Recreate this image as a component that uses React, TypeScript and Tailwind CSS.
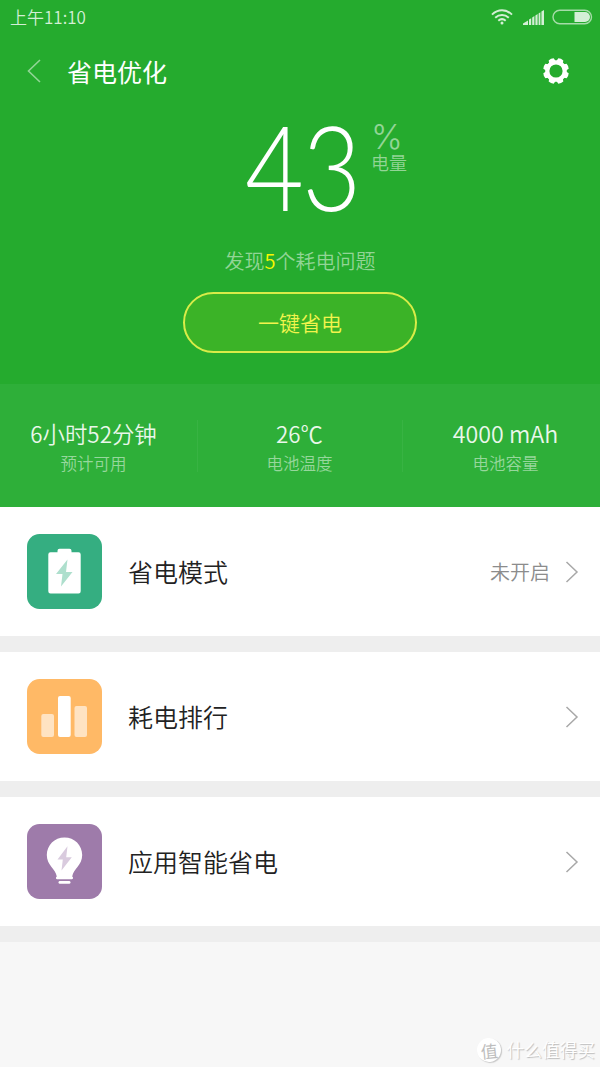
import React from "react";

const Bolt = ({ className }: { className?: string }) => (
  <path className={className} d="M40.5 25.5 29 40h6.5L34 52.5 45.5 38H39z" />
);

const SaverIcon = () => (
  <svg viewBox="0 0 75 75" className="size-[75px] shrink-0">
    <rect width="75" height="75" rx="12.5" fill="#35ae81" />
    <path
      d="M32 14.8h10.500a2 2 0 0 1 2 2v1.500h7a2.200 2.200 0 0 1 2.200 2.200v36.700a2.200 2.200 0 0 1-2.200 2.200H23.500a2.200 2.200 0 0 1-2.200-2.200V20.500a2.200 2.200 0 0 1 2.200-2.200h7v-1.500a2 2 0 0 1 2-2z"
      fill="#fff"
    />
    <Bolt className="fill-[#aedfcd]" />
  </svg>
);

const RankIcon = () => (
  <svg viewBox="0 0 75 75" className="size-[75px] shrink-0">
    <rect width="75" height="75" rx="12.5" fill="#ffb966" />
    <rect x="14.3" y="35" width="12.700" height="23" rx="2" fill="#ffe3c2" />
    <rect x="31" y="17" width="12.700" height="41" rx="2" fill="#fff" />
    <rect x="47.500" y="27" width="12.500" height="31" rx="2" fill="#ffe3c2" />
  </svg>
);

const SmartIcon = () => (
  <svg viewBox="0 0 75 75" className="size-[75px] shrink-0">
    <rect width="75" height="75" rx="12.5" fill="#9e7baa" />
    <path
      d="M37.500 13.500C27.500 13.500 19.800 21.300 19.800 31c0 10.500 8.700 13.500 10 21.500-1.200.6-1.300 2.700.2 2.700h15c1.500 0 1.400-2.100.2-2.700 1.300-8 10-11 10-21.500 0-9.700-7.700-17.500-17.700-17.500z"
      fill="#fff"
    />
    <rect x="31.500" y="57" width="12" height="2.800" rx="1.400" fill="#fff" />
    <path d="M40.500 22.300 30.500 35.500h5.300L34.500 46.500 44.800 33.200h-5.600z" fill="#d9cbde" />
  </svg>
);

const Chevron = () => (
  <svg viewBox="0 0 14 22" className="h-[22px] w-[14px]" fill="none" stroke="#a8a8a8" strokeWidth="1.5">
    <path d="M1.500 1 12 11 1.500 21" />
  </svg>
);

const StatusIcons = () => (
  <div className="flex items-center">
    <svg viewBox="0 0 22 16" className="h-4 w-[22px]" fill="none" stroke="#d3efd5" strokeWidth="2">
      <path d="M1 5.600C7-.2 15-.2 21 5.600" />
      <path d="M4.200 8.700c4-3.600 9.600-3.600 13.600 0" />
      <path d="M7.300 11.700c2.200-1.900 5.200-1.900 7.400 0" />
      <circle cx="11" cy="14" r="1.500" fill="#d3efd5" stroke="none" />
    </svg>
    <svg viewBox="0 0 21 15" className="ml-[10px] h-[15px] w-[21px]" fill="#d3efd5">
      <path d="M0 15v-1.500l5-3V15zM6 15v-5.500l2.200-1.300V15zM9.200 15V7.500l2.200-1.400V15zM12.400 15V5.500l2.200-1.400V15zM15.600 15V3.400l1.800-1.100V15zM18.400 15V1.600L21 0v15z" />
    </svg>
    <svg viewBox="0 0 41 16" className="ml-2 h-4 w-[41px]">
      <rect x="1" y="1.200" width="38.500" height="13.600" rx="6.800" fill="none" stroke="#a5dca8" strokeWidth="1.400" />
      <path d="M22.500 3H33a5 5 0 0 1 0 10H22.500z" fill="#d3efd5" />
    </svg>
  </div>
);

const Gear = () => (
  <svg viewBox="-13 -13 26 26" className="size-[26px]">
    <g fill="#fff">
      {[22.5, 67.5, 112.5, 157.5, 202.5, 247.5, 292.5, 337.5].map((a) => (
        <path key={a} d="M-3.600-8.500-2.700-12.600Q0-13.600 2.700-12.600L3.600-8.500z" transform={`rotate(${a})`} />
      ))}
    </g>
    <circle r="8.700" fill="none" stroke="#fff" strokeWidth="4.200" />
  </svg>
);

const stats = [
  { value: "6小时52分钟", label: "预计可用", className: "pr-[10px]", size: "text-[22.400px]" },
  { value: "26℃", label: "电池温度", className: "border-x border-[#38b343] pr-px", size: "text-[22.400px]" },
  { value: "4000 mAh", label: "电池容量", className: "pl-[8px]", size: "text-[23.200px]" },
];

const rows = [
  { title: "省电模式", icon: <SaverIcon />, status: "未开启" },
  { title: "耗电排行", icon: <RankIcon /> },
  { title: "应用智能省电", icon: <SmartIcon /> },
];

const App = () => {
  return (
    <div className="flex h-[1067px] w-[600px] flex-col overflow-hidden bg-[#f7f7f7] font-['Noto_Sans_CJK_SC',sans-serif]">
      <header className="flex h-[384px] flex-col bg-[#25ab2e]">
        <div className="flex h-[34px] items-center justify-between pr-[7px] pl-[10px]">
          <span className="pb-[2px] text-[17px] leading-none font-[350] text-[#d3efd5]">上午11:10</span>
          <StatusIcons />
        </div>
        <div className="flex h-[74px] items-center pr-[31px] pl-[27px]">
          <svg viewBox="0 0 14 24" className="h-6 w-[14px]" fill="none" stroke="#92d596" strokeWidth="1.600">
            <path d="M13 1 1.500 12 13 23" />
          </svg>
          <h1 className="ml-[26px] flex-1 text-[25px] leading-none font-normal text-white">省电优化</h1>
          <Gear />
        </div>

        <div className="flex h-[130px] pl-[245px]">
          <div className="w-[126px]">
            <span className="inline-block origin-left scale-x-[.86] font-['Lato'] text-[118px] leading-[116px] font-light tracking-[-2px] text-white">
              43
            </span>
          </div>
          <div className="pt-[15px] text-[#92d596]">
            <div className="font-['Inter'] text-[34px] leading-[28px] font-light">%</div>
            <div className="mt-[2px] text-[18px] leading-[18px] font-[350]">电量</div>
          </div>
        </div>
        <p className="text-center text-[20px] leading-[46px] font-[350] text-[#92d596]">
          发现<span className="text-[#f8f800]">5</span>个耗电问题
        </p>
        <button className="mx-auto mt-[8px] h-[61px] w-[234px] rounded-full border-2 border-[#d8ec48] bg-[#3bb327] text-[21px] leading-none font-[350] text-[#f2f44d]">
          一键省电
        </button>
      </header>

      <section className="grid h-[123px] grid-cols-[197px_206px_197px] bg-[#2eaf39] pt-[36px] pb-[35px]">
        {stats.map((s) => (
          <div key={s.label} className={`flex h-[52px] flex-col items-center text-center ${s.className}`}>
            <span className={`leading-[26px] font-[350] whitespace-nowrap text-[#eaf7eb] ${s.size}`}>{s.value}</span>
            <span className="mt-[5px] text-[16.5px] leading-[25px] font-[350] text-[#96d79c]">{s.label}</span>
          </div>
        ))}
      </section>

      <main>
        {rows.map((row) => (
          <div key={row.title} className="flex h-[145px] items-center border-b-[16px] border-[#eeeeee] bg-white pr-[21px] pl-[27px]">
            {row.icon}
            <span className="ml-[26px] flex-1 text-[25px] leading-none font-[350] text-[#222]">{row.title}</span>
            {row.status && <span className="mr-[15px] text-[20px] leading-none font-[350] text-[#8c8c8c]">{row.status}</span>}
            <Chevron />
          </div>
        ))}
      </main>

      <footer className="mt-auto flex h-[35px] items-center justify-end gap-[6px] pr-[5px]">
        <span className="flex size-6 -rotate-6 items-center justify-center rounded-full bg-white text-[17px] leading-none text-[#bdbdbd] shadow-[1px_1px_1px_#c8c8c8]">
          值
        </span>
        <span className="text-[17.700px] leading-none font-[350] text-white [text-shadow:1px_1px_1px_#bbb]">什么值得买</span>
      </footer>
    </div>
  );
};

export default App;
